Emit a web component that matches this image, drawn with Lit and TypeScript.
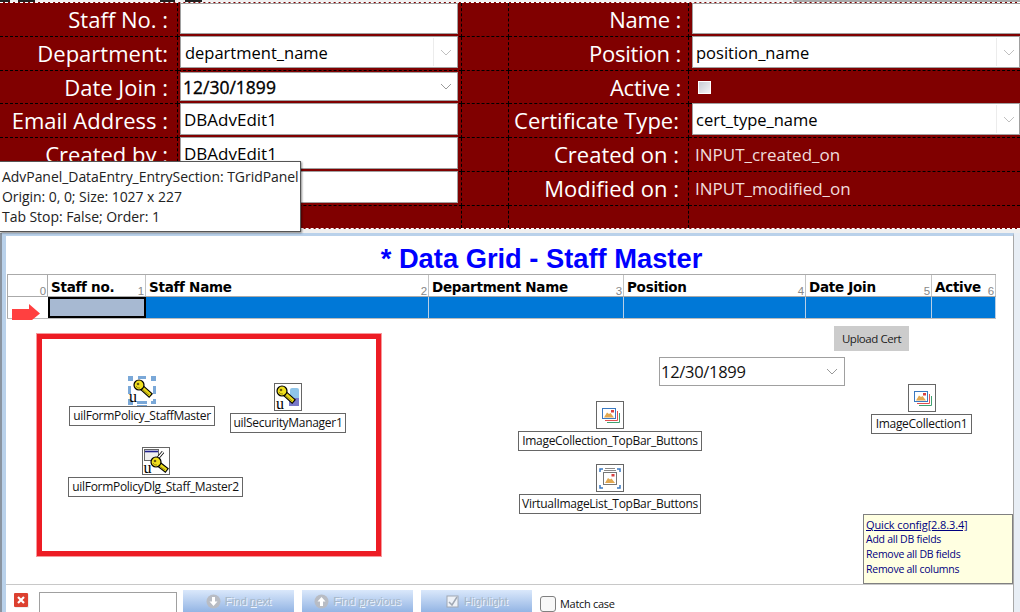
import { LitElement, html, css, svg } from "lit";
import { customElement } from "lit/decorators.js";

type Field = { kind: string; text?: string };
const rows: { l: string; lf: Field; r: string; rf: Field; h: number }[] = [
  { l: "Staff No. :", lf: { kind: "text first" }, r: "Name :", rf: { kind: "text first" }, h: 34 },
  { l: "Department:", lf: { kind: "combo", text: "department_name" }, r: "Position :", rf: { kind: "combo", text: "position_name" }, h: 34 },
  { l: "Date Join :", lf: { kind: "date", text: "12/30/1899" }, r: "Active :", rf: { kind: "check" }, h: 33 },
  { l: "Email Address :", lf: { kind: "text", text: "DBAdvEdit1" }, r: "Certificate Type:", rf: { kind: "combo", text: "cert_type_name" }, h: 34 },
  { l: "Created by :", lf: { kind: "text", text: "DBAdvEdit1" }, r: "Created on :", rf: { kind: "plain", text: "INPUT_created_on" }, h: 34 },
  { l: "", lf: { kind: "text" }, r: "Modified on :", rf: { kind: "plain", text: "INPUT_modified_on" }, h: 34 },
  { l: "", lf: { kind: "none" }, r: "", rf: { kind: "none" }, h: 22 },
];

const cols = [
  { t: "", n: "0", w: 41 },
  { t: "Staff no.", n: "1", w: 98 },
  { t: "Staff Name", n: "2", w: 283 },
  { t: "Department Name", n: "3", w: 195 },
  { t: "Position", n: "4", w: 182 },
  { t: "Date Join", n: "5", w: 126 },
  { t: "Active", n: "6", w: 64 },
];

const chevron = html`<svg class="chev" viewBox="0 0 12 7"><path d="M1 1l5 5 5-5" fill="none" stroke="currentColor" stroke-width="1"/></svg>`;

const keyShape = (hx: number, hy: number, tx: number, ty: number) => svg`
  <path d="M${hx} ${hy}L${tx} ${ty}" stroke="#000" stroke-width="5.600" stroke-linecap="square"/>
  <path d="M${hx} ${hy}L${tx} ${ty}" stroke="#e8d818" stroke-width="3.400" stroke-linecap="square"/>
  <path d="M${hx + 3} ${hy + 4}L${tx} ${ty + 1}" stroke="#9a8a10" stroke-width="1"/>
  <circle cx=${hx} cy=${hy} r="5" fill="#f0e020" stroke="#000" stroke-width="1.200"/>
  <path d="M${hx - 3} ${hy + 1}a3.500 3.500 0 0 0 4 2" fill="none" stroke="#9a8a10" stroke-width="1"/>
  <circle cx=${hx - 1} cy=${hy - 1} r="1.300" fill="#6a5a10"/>`;

const imgShape = svg`
  <path d="M21.500 10v9.500H9" fill="none" stroke="#e05050" stroke-width="1"/>
  <path d="M23.500 12v9.500H11" fill="none" stroke="#40a070" stroke-width="1"/>
  <rect x="6.500" y="7.500" width="13" height="10" fill="#fff" stroke="#3a78c0" stroke-width="1"/>
  <path d="M8 16.500l3-5 2 1.500 1.500-1 3.500 4.500z" fill="#e2a850"/>
  <rect x="15" y="9" width="3" height="2.500" fill="#d84040"/>`;

const virtShape = svg`
  <path d="M4 8V5h3M24 8V5h-3M4 21v3h3M24 21v3h-3" fill="none" stroke="#3a78c0" stroke-width="1.500"/>
  <path d="M9 4.500h10M8 6.500h12" stroke="#888" stroke-width="1"/>
  <rect x="7.500" y="8.500" width="13" height="12" fill="#fff" stroke="#777" stroke-width="1"/>
  <path d="M9 19l3-5 2 1.500 1.500-1 3.500 4.500z" fill="#e2a850"/>
  <rect x="15.500" y="10" width="3" height="2.500" fill="#d84040"/>`;

const icons: Record<string, unknown> = {
  keySel: svg`
    <g fill="#7aa8d8">
      <path d="M0 0h5v5H0zM10 0h8v3h-8zM23 0h5v5h-5zM0 10h3v8H0zM25 10h3v8h-3zM0 23h3v3H0zM25 23h3v5h-5v-3h2zM9 25h10v3H9zM0 26h5v3H0zM9 29h10v1H9z"/>
    </g>
    ${keyShape(11, 9, 21, 18)}`,
  keyMgr: svg`
    <rect x="16" y="5" width="9" height="12" rx="2" fill="#8fc4e8"/>
    <path d="M15 15h10v8H15z" fill="#7878c8"/>
    ${keyShape(8, 8, 18, 17)}`,
  keyDlg: svg`
    <rect x="2.500" y="2.500" width="14" height="11" fill="#eee" stroke="#666" stroke-width="1"/>
    <path d="M3 4.500h13" stroke="#20208c" stroke-width="1.600"/>
    <path d="M10 18L21 5" stroke="#000" stroke-width="3"/><path d="M10 18L21 5" stroke="#fff" stroke-width="1.500"/>
    ${keyShape(14, 15, 23, 22)}`,
  img: imgShape,
  virt: virtShape,
};

const nodes = [
  { x: 69, y: 376, w: 146, label: "uilFormPolicy_StaffMaster", icon: "keySel", u: true, sel: true },
  { x: 230, y: 383, w: 116, label: "uilSecurityManager1", icon: "keyMgr", u: true },
  { x: 68, y: 447, w: 175, label: "uilFormPolicyDlg_Staff_Master2", icon: "keyDlg", u: true },
  { x: 518, y: 401, w: 184, label: "ImageCollection_TopBar_Buttons", icon: "img" },
  { x: 519, y: 464, w: 182, label: "VirtualImageList_TopBar_Buttons", icon: "virt" },
  { x: 871, y: 384, w: 101, label: "ImageCollection1", icon: "img" },
];

const OX = 6;
const OY = 319;

@customElement("app-root")
export class AppRoot extends LitElement {
  static styles = css`
    :host {
      display: block; position: relative; width: 1020px; height: 612px; overflow: hidden;
      background: #f0f0f0; font-family: "Open Sans", "Noto Sans", sans-serif; color: #000;
    }
    .page { display: flex; flex-direction: column; height: 612px; }
    .strip {
      height: 2px; flex: none;
      background:
        linear-gradient(90deg, #222 0 10px, transparent 10px 18px, #222 18px 35px, transparent 35px 160px, #222 160px 175px, transparent 175px 185px, #222 185px 202px, transparent 202px 793px, #aaa 793px 1020px);
    }
    .form {
      flex: none; display: grid; background: #800000; color: #fff;
      grid-template-columns: 178px 284px 47px 180px 331px;
      border-top: 1px dashed #fff; border-bottom: 1px dashed #fff; height: 227px; box-sizing: border-box;
    }
    .cell { border-right: 1px dashed #000; border-bottom: 1px dashed #000; display: flex; min-width: 0; box-sizing: border-box; }
    .cell.last { border-bottom: 0; }
    .cell.end { border-right: 0; }
    .lab { justify-content: flex-end; align-items: center; font-size: 22px; padding-right: 9px; white-space: nowrap; padding-bottom: 1px; }
    .lab.tight { padding-right: 7px; letter-spacing: -0.2px; }
    .fld { padding: 0; }
    .box {
      flex: 1; margin: -1px 3px 2px 2px; background: #fff; border: 1px solid #a0a0a0; color: #000; display: flex; align-items: center;
      font-size: 17px; padding-left: 3px; box-sizing: border-box; position: relative; min-width: 0;
    }
    .box.first { margin-top: 0; }
    .box.date { margin-top: 1px; -webkit-text-stroke: 0.35px #000; padding-left: 2px; font-size: 17.500px; }
    .box.combo { padding-left: 4px; font-size: 16.500px; border-color: #fff; outline: 1px solid #a0a0a0; outline-offset: -1px; }
    .r .box { margin-right: 0; margin-left: 3px; }
    .r .box.combo { padding-left: 3px; }
    .r .box.combo, .r .box.text { border-right: 0; }
    .chev { width: 12px; height: 7px; flex: none; }
    .arr { position: absolute; right: 0; top: 1px; bottom: 1px; width: 23px; border-left: 1px solid #ececec; display: flex; align-items: center; justify-content: center; color: #c0c0c0; }
    .date .arr { border: 0; color: #999; right: 0; }
    .plain { display: flex; align-items: center; font-size: 17px; padding-left: 6px; color: #f0dcdc; padding-bottom: 1px; }
    .chk { width: 13px; height: 13px; background: linear-gradient(135deg, #c8ccd4, #f4f4f6); border: 1px solid #fff; box-sizing: border-box; margin: 10px 0 0 9px; }

    .tip {
      position: absolute; left: 0; top: 161px; width: 301px; height: 71px; box-sizing: border-box; background: #fff;
      border: 1px solid #555; border-left: 0; box-shadow: 1px 1px 2px rgba(0,0,0,.45);
      padding: 5px 0 0 2px; font-size: 14px; line-height: 20px; color: #222; letter-spacing: -0.05px; white-space: nowrap;
    }

    .lower {
      flex: 1; margin-top: 4px; display: flex; flex-direction: column; min-height: 0; background: #fff;
      border-top: 3px solid #b9d1ea; border-left: 4px solid #b9d1ea; border-right: 1px solid #a8a8a8;
      margin-right: 6px; position: relative; box-shadow: -2px 0 0 #8a94a0, 7px 0 0 #e8eef5;
      margin-left: 2px;
    }
    .title {
      flex: none; height: 38px; display: flex; align-items: center; justify-content: center; padding-left: 64px;
      font-family: "Liberation Sans", Arial, sans-serif; font-weight: 700; font-size: 27.300px; color: #0000ff; padding-top: 8px; box-sizing: border-box; white-space: nowrap;
    }
    .grid { flex: none; margin-left: 1px; display: flex; flex-direction: column; width: 989px; }
    .hdr { display: flex; height: 23px; border-top: 1px solid #aaa; border-left: 1px solid #aaa; border-bottom: 1px solid #aaa; box-sizing: border-box; }
    .hc { flex: none; box-sizing: border-box; border-right: 1px solid #c4c4c4; position: relative; font-family: "DejaVu Sans", sans-serif; font-weight: 700; font-size: 13.500px; padding: 3px 0 0 3px; white-space: nowrap; letter-spacing: -0.27px; line-height: 19px; }
    .hc:first-child { border-right-color: #aaa; }
    .hc .n { position: absolute; right: 1px; bottom: -1px; font: 400 11.500px "Liberation Sans", sans-serif; color: #888; }
    .row { display: flex; height: 22px; border-bottom: 1px solid #bbb; box-sizing: border-box; margin-right: 0; }
    .rc { flex: none; box-sizing: border-box; background: #0078d7; border-right: 1px solid #b8cfe6; }
    .rc.ind { background: #fff; border-left: 1px solid #aaa; border-right: 0; display: flex; align-items: flex-start; overflow: visible; }
    .rc.cur { background: #a7b9d2; border: 2px solid #000; }
    .arrow { width: 28px; height: 16px; margin: 7px 0 0 4px; flex: none; position: relative; z-index: 1; }

    .canvas { flex: 1; position: relative; min-height: 0; }
    .redbox { position: absolute; border: 5px solid #ed1c24; box-sizing: border-box; outline: 1px solid rgba(237,28,36,.45); }
    .node { position: absolute; display: flex; flex-direction: column; align-items: center; gap: 2px; }
    .ic { width: 28px; height: 28px; border: 1px solid #666; box-sizing: border-box; background: #fff; position: relative; }
    .ic svg { position: absolute; left: -1px; top: -1px; width: 28px; height: 28px; }
    .ic.sel { border: 0; }
    .ic.sel svg { left: 0; top: 0; overflow: visible; }
    .u { position: absolute; left: 1px; bottom: -2px; font: 400 16px "Liberation Serif", serif; color: #000; line-height: 16px; }
    .ic.sel .u { left: 1px; bottom: -1px; }
    .nl { height: 20px; box-sizing: border-box; width: 100%; border: 1px solid #666; background: #fff; display: flex; align-items: center; justify-content: center; font-size: 12px; letter-spacing: -0.3px; white-space: nowrap; color: #111; padding-bottom: 1px; }
    .upload { position: absolute; background: #ccc; display: flex; align-items: center; justify-content: center; font-size: 11.500px; color: #222; letter-spacing: -0.45px; }
    .dp { position: absolute; border: 1px solid #a0a0a0; background: #fff; box-sizing: border-box; display: flex; align-items: center; justify-content: space-between; padding: 0 6px 0 1px; font-size: 16.500px; letter-spacing: -0.3px; color: #111; }
    .dp .chev { color: #999; }
    .qc { position: absolute; box-sizing: border-box; background: #ffffe1; border: 1px solid #808080; padding: 3px 0 0 2px; font-size: 10.500px; line-height: 15px; color: #000080; letter-spacing: -0.25px; white-space: nowrap; }
    .qc u { display: block; font-size: 11px; letter-spacing: -0.12px; margin-top: -1px; }

    .tb { flex: none; height: 28px; box-sizing: border-box; border-top: 1px solid #c8c8c8; display: flex; align-items: flex-start; overflow: hidden; padding: 8px 0 0 8px; }
    .x { width: 14px; height: 14px; flex: none; border-radius: 1px; background: #dc4030; box-shadow: 1px 1px 0 #eee; display: flex; }
    .x svg { width: 14px; height: 14px; }
    .find { width: 138px; height: 21px; margin: -1px 6px 0 11px; flex: none; box-sizing: border-box; border: 1px solid #a0a0a0; background: #fff; }
    .btn {
      width: 111px; height: 24px; margin: -3px 8px 0 0; flex: none; display: flex; align-items: center; justify-content: center; gap: 4px;
      background: linear-gradient(#dae8fb, #8db0e2); font: 11.500px "Liberation Sans", sans-serif; color: #a6b6c8; text-shadow: 1px 1px 0 #eef4fc;
      letter-spacing: -0.1px; padding-bottom: 2px; box-sizing: border-box;
    }
    .btn svg { width: 15px; height: 15px; flex: none; }
    .btn u { text-decoration: underline; }
    .cb { width: 16px; height: 16px; flex: none; box-sizing: border-box; border: 1px solid #808080; border-radius: 3px; background: #f8f8f8; margin: 3px 4px 0 0; }
    .mc { font-size: 11px; letter-spacing: -0.3px; color: #111; margin-top: 3px; white-space: nowrap; }
  `;

  private renderField(f: Field) {
    if (f.kind === "none") return "";
    if (f.kind === "check") return html`<div class="chk"></div>`;
    if (f.kind === "plain") return html`<div class="plain">${f.text}</div>`;
    const arrow = f.kind === "combo" || f.kind === "date" ? html`<div class="arr">${chevron}</div>` : "";
    return html`<div class="box ${f.kind}">${f.text ?? ""}${arrow}</div>`;
  }

  private renderRow(r: (typeof rows)[number], i: number) {
    const last = i === rows.length - 1 ? "last" : "";
    const tight = i < 3 ? "tight" : "";
    return html`
      <div class="cell lab ${last}">${r.l}</div>
      <div class="cell fld ${last}">${this.renderField(r.lf)}</div>
      <div class="cell ${last}"></div>
      <div class="cell lab ${tight} ${last}">${r.r}</div>
      <div class="cell fld r end ${last}">${this.renderField(r.rf)}</div>`;
  }

  private renderNode(n: (typeof nodes)[number]) {
    return html`<div class="node" style="left:${n.x - OX}px;top:${n.y - OY}px;width:${n.w}px">
      <div class="ic ${n.sel ? "sel" : ""}">
        <svg viewBox="0 0 28 28" fill="none">${icons[n.icon]}</svg>
        ${n.u ? html`<span class="u">u</span>` : ""}
      </div>
      <div class="nl">${n.label}</div>
    </div>`;
  }

  render() {
    return html`<div class="page">
      <div class="strip"></div>
      <div class="form" style="grid-template-rows:${rows.map((r) => r.h + "px").join(" ")}">
        ${rows.map((r, i) => this.renderRow(r, i))}
      </div>
      <div class="lower">
        <div class="title">* Data Grid - Staff Master</div>
        <div class="grid">
          <div class="hdr">
            ${cols.map((c, i) => html`<div class="hc" style="width:${i === 0 ? c.w - 1 : c.w}px">${c.t}<span class="n">${c.n}</span></div>`)}
          </div>
          <div class="row">
            ${cols.map((c, i) =>
              i === 0
                ? html`<div class="rc ind" style="width:${c.w}px"><svg class="arrow" viewBox="0 0 28 16"><path d="M0 5h17V0l11 9.500-8 6.500H0z" fill="#ff4040"/></svg></div>`
                : html`<div class="rc ${i === 1 ? "cur" : ""}" style="width:${c.w}px"></div>`
            )}
          </div>
        </div>
        <div class="canvas">
          <div class="redbox" style="left:${37 - OX}px;top:${334 - OY}px;width:344px;height:222px"></div>
          ${nodes.map((n) => this.renderNode(n))}
          <div class="upload" style="left:${834 - OX}px;top:${326 - OY}px;width:75px;height:25px">Upload Cert</div>
          <div class="dp" style="left:${659 - OX}px;top:${357 - OY}px;width:186px;height:29px">12/30/1899 ${chevron}</div>
          <div class="qc" style="left:${863 - OX}px;top:${514 - OY}px;width:150px;height:70px">
            <u>Quick config[2.8.3.4]</u>Add all DB fields<br />Remove all DB fields<br />Remove all columns
          </div>
        </div>
        <div class="tb">
          <div class="x"><svg viewBox="0 0 14 14"><path d="M4 4l6 6M10 4l-6 6" stroke="#fff" stroke-width="2.200"/></svg></div>
          <div class="find"></div>
          <div class="btn"><svg viewBox="0 0 15 15"><circle cx="7.500" cy="7.500" r="7" fill="#b8bcc4"/><path d="M7.500 12L3.500 7.500H6V3h3v4.500h2.500z" fill="#fff"/></svg><span>Find <u>n</u>ext</span></div>
          <div class="btn"><svg viewBox="0 0 15 15"><circle cx="7.500" cy="7.500" r="7" fill="#b8bcc4"/><path d="M7.500 3l4 4.500H9V12H6V7.500H3.500z" fill="#fff"/></svg><span>Find <u>p</u>revious</span></div>
          <div class="btn"><svg viewBox="0 0 15 15"><rect x="2" y="2" width="11" height="11" fill="#eef2f8" stroke="#a0a8b4"/><path d="M4 8l3 3 5-8" fill="none" stroke="#a0a8b4" stroke-width="1.500"/></svg><span>Highlight</span></div>
          <div class="cb"></div>
          <div class="mc">Match case</div>
        </div>
      </div>
    </div>
    <div class="tip">AdvPanel_DataEntry_EntrySection: TGridPanel<br />Origin: 0, 0; Size: 1027 x 227<br />Tab Stop: False; Order: 1</div>`;
  }
}
